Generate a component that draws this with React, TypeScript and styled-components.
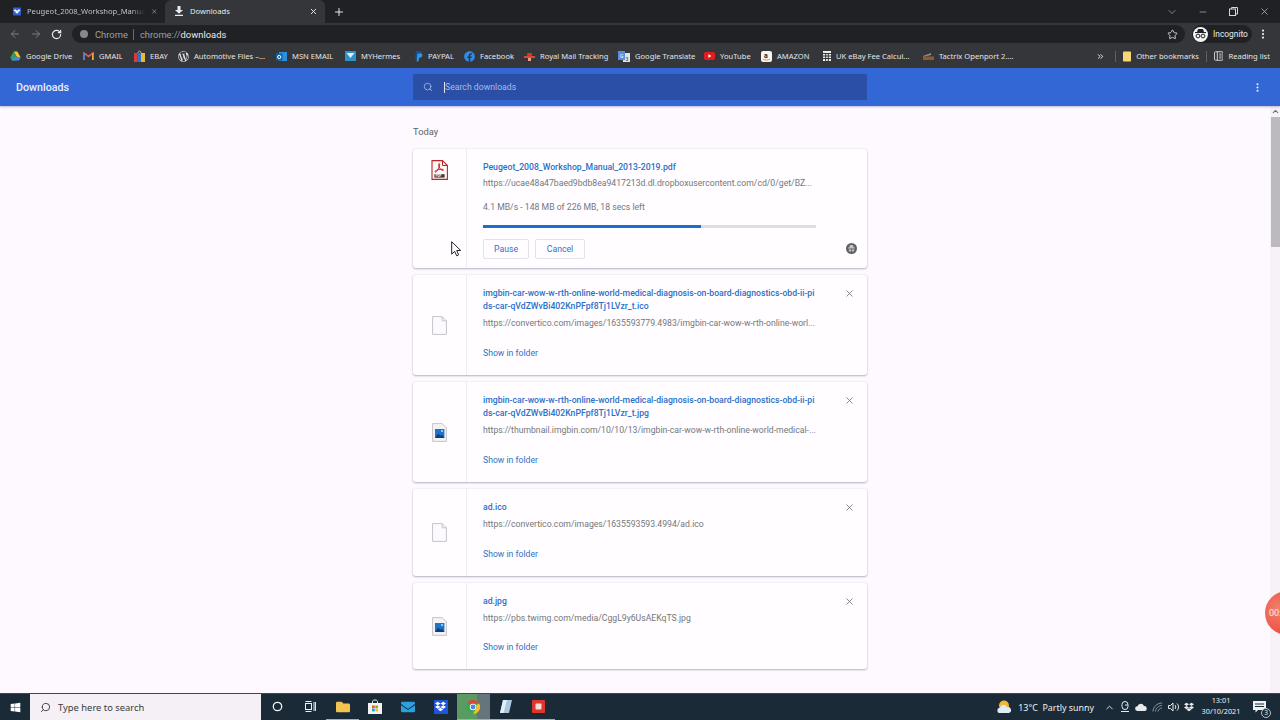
import React from 'react';
import styled, { createGlobalStyle } from 'styled-components';
import {
  ArrowLeft, ArrowRight, RotateCw, Star, MoreVertical, X, Plus, ChevronDown, Minus, Search, ChevronUp,
  ChevronsRight,
} from 'lucide-react';
import { FaDropbox, FaFacebook, FaWordpressSimple, FaWindows, FaFolder, FaEnvelope } from 'react-icons/fa';

const Global = createGlobalStyle`
  html, body { margin: 0; padding: 0; background: #fdf9fe; }
  * { box-sizing: border-box; }
`;

const Screen = styled.div`
  position: relative;
  width: 1280px;
  height: 720px;
  overflow: hidden;
  display: flex;
  flex-direction: column;
  font-family: Roboto, "Liberation Sans", sans-serif;
  background: #fdf9fe;
`;

/* browser chrome */
const TabStrip = styled.div`
  height: 23px;
  background: #202124;
  display: flex;
  align-items: center;
  color: #e8eaed;
  font-family: "Noto Sans", Roboto, sans-serif;
  font-size: 7.6px;
`;
const Tab = styled.div<{ $active?: boolean }>`
  width: ${(p) => (p.$active ? 160 : 165)}px;
  height: 23px;
  padding: 0 7px 1px ${(p) => (p.$active ? 9 : 13)}px;
  display: flex;
  align-items: center;
  gap: 6px;
  background: ${(p) => (p.$active ? '#35363a' : 'transparent')};
  border-radius: 6px 6px 0 0;
  color: ${(p) => (p.$active ? '#e8eaed' : '#bdc1c6')};
`;
const TabTitle = styled.span<{ $fade?: boolean }>`
  flex: 1;
  white-space: nowrap;
  ${(p) => p.$fade && 'mask-image: linear-gradient(to right, #000 88%, transparent 100%);'}
`;
const NewTab = styled.div`
  width: 21px;
  margin-left: 3px;
  display: flex;
  justify-content: center;
`;
const WindowButtons = styled.div`
  margin-left: auto;
  display: flex;
  align-items: center;
  color: #c8cacc;
`;
const WindowButton = styled.div`
  width: 31px;
  display: flex;
  justify-content: center;
`;
const Toolbar = styled.div`
  height: 22px;
  background: #35363a;
  display: flex;
  align-items: center;
  padding: 0 7px 0 4px;
`;
const NavButton = styled.div<{ $dim?: boolean }>`
  width: 21px;
  display: flex;
  justify-content: center;
  color: ${(p) => (p.$dim ? '#7b7d80' : '#e8eaed')};
`;
const Omnibox = styled.div`
  margin-left: 5px;
  flex: 1;
  height: 18px;
  border-radius: 9px;
  background: #202124;
  display: flex;
  align-items: center;
  padding: 0 7px 0 8px;
  font-size: 9.4px;
  color: #9aa0a6;
`;
const SecureDot = styled.div`
  width: 8px;
  height: 8px;
  border-radius: 50%;
  background: #85888c;
  margin-right: 7px;
`;
const OmniDivider = styled.div`
  width: 1px;
  height: 11px;
  background: #6a6c70;
  margin: 0 6px 0 5px;
`;
const UrlStrong = styled.span`
  color: #e8eaed;
`;
const BookmarkStar = styled(Star)`
  margin-left: auto;
  color: #d5d7da;
`;
const IncognitoPill = styled.div`
  margin-left: 7px;
  width: 60px;
  height: 18px;
  border-radius: 9px;
  background: #202124;
  display: flex;
  align-items: center;
  gap: 5px;
  padding-left: 1px;
  color: #e8eaed;
  font-size: 8.4px;
`;
const IncognitoFace = styled.div`
  width: 15px;
  height: 15px;
  border-radius: 50%;
  background: #f1f3f4;
  display: flex;
  align-items: center;
  justify-content: center;
`;
const BookmarkBar = styled.div`
  height: 23px;
  padding: 0 0 1px 10px;
  background: #35363a;
  display: flex;
  align-items: center;
  color: #e3e5e8;
  font-family: "Noto Sans", Roboto, sans-serif;
  font-size: 7.6px;
`;
const Bookmark = styled.div<{ $w: number }>`
  width: ${(p) => p.$w}px;
  flex: none;
  display: flex;
  align-items: center;
  gap: 5px;
  white-space: nowrap;
`;
const BarDivider = styled.div`
  width: 1px;
  height: 11px;
  background: #5f6164;
`;
const BarRight = styled.div`
  margin-left: auto;
  display: flex;
  align-items: center;
  padding-right: 10px;
  gap: 7px;
`;
const OverflowChevrons = styled(ChevronsRight)`
  margin-right: 3px;
`;

/* page header */
const Header = styled.div`
  height: 38px;
  background: #3367d6;
  display: grid;
  grid-template-columns: 1fr 454px 1fr;
  align-items: center;
  box-shadow: 0 1px 2px rgba(60, 64, 120, 0.35);
  z-index: 1;
`;
const HeaderTitle = styled.div`
  padding-left: 16px;
  color: #e8eefb;
  font-size: 10.7px;
  font-weight: 500;
`;
const SearchBox = styled.div`
  height: 26px;
  background: #2b4fa6;
  display: flex;
  align-items: center;
  padding-left: 10px;
  color: #a5bbe8;
  font-size: 8.7px;
  border-radius: 1px;
`;
const Caret = styled.span`
  width: 1px;
  height: 11px;
  background: #dfe7f7;
  margin: 0 0 0 11px;
`;
const HeaderMenu = styled.div`
  display: flex;
  justify-content: flex-end;
  padding-right: 17px;
  color: #e8eefb;
`;

/* downloads list */
const Content = styled.div`
  flex: 1;
  min-height: 0;
  display: flex;
`;
const Scroller = styled.div`
  flex: 1;
  padding-left: 10px;
  display: flex;
  flex-direction: column;
  align-items: center;
  overflow: hidden;
`;
const List = styled.div`
  width: 454px;
`;
const DayLabel = styled.div`
  margin: 19px 0 11px;
  height: 13px;
  line-height: 13px;
  font-size: 9.4px;
  color: #5f6368;
`;
const Card = styled.div`
  display: flex;
  margin-bottom: 7.5px;
  background: #fffdff;
  border-radius: 3px;
  box-shadow: 0 1px 2px rgba(70, 60, 90, 0.35), 0 0 2px rgba(70, 60, 90, 0.12);
`;
const IconColumn = styled.div<{ $top?: boolean }>`
  flex: none;
  width: 54px;
  border-right: 1px solid #f0ecf2;
  display: flex;
  justify-content: center;
  align-items: ${(p) => (p.$top ? 'flex-start' : 'center')};
  padding-top: ${(p) => (p.$top ? 11 : 0)}px;
`;
const CardBody = styled.div<{ $tight?: boolean }>`
  flex: 1;
  padding: 12px 12.5px ${(p) => (p.$tight ? 9 : 13.1)}px 16px;
`;
const TitleRow = styled.div`
  display: flex;
  justify-content: space-between;
`;
const FileName = styled.div`
  font-size: 8.67px;
  line-height: 13px;
  font-weight: 500;
  color: #2a70c8;
  white-space: nowrap;
`;
const CloseIcon = styled.div`
  color: #5f6368;
  height: 13px;
  display: flex;
  align-items: center;
`;
const SourceUrl = styled.div`
  margin-top: 3.4px;
  font-size: 8.67px;
  line-height: 13px;
  color: #74777b;
  white-space: nowrap;
`;
const Status = styled(SourceUrl)`
  margin-top: 10.6px;
`;
const ProgressTrack = styled.div`
  width: 333px;
  height: 3px;
  margin-top: 11px;
  background: #dfdde2;
`;
const ProgressFill = styled.div`
  height: 100%;
  background: #1a6ed2;
`;
const LinkAction = styled.div`
  margin-top: 13.9px;
  height: 18px;
  line-height: 18px;
  font-size: 8.67px;
  color: #2f72c6;
`;
const ButtonRow = styled.div`
  margin-top: 11px;
  margin-right: -2px;
  display: flex;
  align-items: center;
  gap: 6px;
`;
const ActionButton = styled.div<{ $w: number }>`
  width: ${(p) => p.$w}px;
  height: 20px;
  border: 1px solid #e4e1e8;
  border-radius: 2px;
  display: flex;
  align-items: center;
  justify-content: center;
  font-size: 8.67px;
  color: #2f72c6;
`;
const CancelBadge = styled.div`
  margin-left: auto;
  width: 11px;
  height: 11px;
  border-radius: 50%;
  background: #5f6164;
  display: flex;
  align-items: center;
  justify-content: center;
`;

/* scrollbar */
const Scrollbar = styled.div`
  flex: none;
  width: 10px;
  background: #f6f2f7;
  display: flex;
  flex-direction: column;
  align-items: center;
`;
const ScrollArrow = styled.div`
  height: 11px;
  display: flex;
  align-items: center;
  color: #77757b;
`;
const ScrollThumb = styled.div`
  width: 9px;
  height: 130px;
  background: #bdb9c0;
`;

/* taskbar */
const Taskbar = styled.div`
  height: 27px;
  flex: none;
  background: #1b2a37;
  border-top: 1px solid #3c4752;
  display: flex;
  align-items: center;
  color: #f1f1f1;
  font-family: "Noto Sans", Roboto, sans-serif;
`;
const StartButton = styled.div`
  width: 30px;
  display: flex;
  justify-content: center;
  color: #fff;
`;
const TaskSearch = styled.div`
  width: 231px;
  height: 26px;
  background: #f4f0f6;
  display: flex;
  align-items: center;
  gap: 7px;
  padding-left: 10px;
  color: #3a3a3d;
  font-size: 9.4px;
`;
const MirroredSearch = styled(Search)`
  transform: scaleX(-1);
  color: #3a3a3d;
`;
const TaskIcon = styled.div<{ $active?: boolean; $open?: boolean }>`
  width: 32.7px;
  height: 26px;
  display: flex;
  align-items: center;
  justify-content: center;
  background: ${(p) => (p.$active ? 'linear-gradient(to right, #5c9a63 62%, #66747c 62%)' : 'transparent')};
  border-bottom: 1px solid ${(p) => (p.$open ? '#76b9ed' : 'transparent')};
`;
const DropboxTile = styled.div`
  width: 14px;
  height: 14px;
  background: #1f55d8;
  color: #fff;
  display: flex;
  align-items: center;
  justify-content: center;
`;
const Tray = styled.div`
  margin-left: auto;
  display: flex;
  align-items: center;
  height: 26px;
  padding-right: 7px;
`;
const Weather = styled.div`
  display: flex;
  align-items: center;
  gap: 6px;
  font-size: 8.9px;
  margin-right: 7px;
`;
const TrayIcon = styled.div`
  width: 16px;
  display: flex;
  justify-content: center;
  color: #e8ebee;
`;
const Clock = styled.div`
  width: 46px;
  margin: -2px 0 0 1px;
  text-align: center;
  font-size: 7.3px;
  line-height: 11.5px;
`;
const Notify = styled.div`
  position: relative;
  width: 27px;
  margin-left: 2px;
  display: flex;
  justify-content: center;
`;
const NotifyCount = styled.div`
  position: absolute;
  right: 2px;
  bottom: -5px;
  width: 10px;
  height: 10px;
  border-radius: 50%;
  border: 1px solid #b9bec3;
  background: #1b2a37;
  font-size: 6.5px;
  line-height: 8px;
  text-align: center;
`;

/* things lying over the page */
const RecorderBubble = styled.div`
  position: absolute;
  left: 1265px;
  top: 591px;
  width: 44px;
  height: 44px;
  padding-left: 4px;
  border-radius: 50%;
  background: radial-gradient(circle at 30% 40%, #f0806a, #ee4b3f 70%);
  color: #fde9e4;
  font-size: 9px;
  line-height: 44px;
`;
const Pointer = styled.svg`
  position: absolute;
  left: 451px;
  top: 241px;
`;

const DropboxFavicon = () => (
  <svg width="11" height="11" viewBox="0 0 11 11">
    <rect width="11" height="11" rx="1" fill="#2f5fd0" />
    <path d="M3 2.5 5.5 4 3 5.7.9 4zM8 2.5 10.1 4 8 5.7 5.5 4zM3 6.2l2.5-1.6L8 6.2 5.5 8.6z" fill="#fff" />
  </svg>
);
const TabDownload = () => (
  <svg width="10" height="10" viewBox="0 0 10 10">
    <path d="M3.5 0h3v4H9L5 7.800 1 4h2.500zM1 8.800h8V10H1z" fill="#e8eaed" />
  </svg>
);

const DriveIcon = () => (
  <svg width="11" height="10" viewBox="0 0 11 10">
    <path d="M3.7.5h3.6l3.4 6H7.1z" fill="#f6c43c" />
    <path d="M3.7.5 7 6.5 5.3 9.5H2L.3 6.5z" fill="#2da55c" opacity=".95" />
    <path d="M3.8 6.5h6.9L9 9.5H2z" fill="#4a86e8" />
  </svg>
);
const GmailIcon = () => (
  <svg width="11" height="8" viewBox="0 0 11 8">
    <path d="M1 8V1l4.5 3.5L10 1v7" fill="none" stroke="#dc5a50" strokeWidth="1.6" />
    <path d="M9.2 1.2 10.5.4V8H9z" fill="#e8b23c" />
    <path d="M.5.4 1.8 1.2V8H.5z" fill="#4a86e8" />
  </svg>
);
const EbayBags = () => (
  <svg width="11" height="12" viewBox="0 0 11 12">
    <rect y="3" width="3.5" height="9" fill="#dd3b35" />
    <rect x="3.5" y="3" width="3.5" height="9" fill="#2e73c8" />
    <rect x="7" y="3" width="4" height="9" fill="#eab92d" />
    <path d="M4 3C4 .5 7 .5 7 3" fill="none" stroke="#bbb" />
  </svg>
);
const OutlookIcon = () => (
  <svg width="11" height="11" viewBox="0 0 11 11">
    <rect x="3" y="1" width="8" height="9" fill="#2b8fdc" />
    <rect y="2.5" width="6.5" height="7" fill="#0f63ae" />
    <circle cx="3.2" cy="6" r="1.6" fill="none" stroke="#fff" />
  </svg>
);
const HermesIcon = () => (
  <svg width="11" height="10" viewBox="0 0 11 10">
    <rect width="11" height="10" fill="#2d92c9" />
    <path d="M1.5 2h8L5.5 7z" fill="#d9f0fa" />
  </svg>
);
const PaypalIcon = () => (
  <svg width="9" height="11" viewBox="0 0 9 11">
    <path d="M2 0h3.6C8 0 8.5 2 7.6 3.6 7 4.8 5.6 5.2 4 5.2L3.4 8.5H1z" fill="#1a4c9c" />
    <path d="M3.5 2.5h3.2c1.8 0 2 1.8 1.2 3C7.4 6.4 6.4 6.8 5 6.8L4.5 10.5H2.6z" fill="#2e9ad8" />
  </svg>
);
const RoyalMailIcon = () => (
  <svg width="11" height="9" viewBox="0 0 11 9">
    <rect x="0" y="4" width="11" height="2" fill="#d84a35" />
    <rect x="3" y="1" width="5" height="3" rx="1" fill="#cf3b2a" />
    <rect x="4" y="6" width="3" height="3" fill="#e9a08e" />
  </svg>
);
const TranslateIcon = () => (
  <svg width="12" height="11" viewBox="0 0 12 11">
    <rect x="5" y="2" width="7" height="9" fill="#dfe3ea" />
    <rect width="7" height="9" fill="#5a8de0" />
    <text x="2" y="6.5" fontSize="5" fill="#fff" fontFamily="Roboto">G</text>
    <text x="7.5" y="9.5" fontSize="5" fill="#333" fontFamily="Roboto">3</text>
  </svg>
);
const YoutubeIcon = () => (
  <svg width="11" height="8" viewBox="0 0 11 8">
    <rect width="11" height="8" rx="2" fill="#e01e1e" />
    <path d="M4.4 2.2 7.4 4 4.4 5.8z" fill="#fff" />
  </svg>
);
const AmazonIcon = () => (
  <svg width="11" height="11" viewBox="0 0 11 11">
    <rect width="11" height="11" rx="2" fill="#f4f4f4" />
    <text x="3" y="6.8" fontSize="7" fontWeight="700" fill="#222" fontFamily="Roboto">a</text>
    <path d="M2 8.2c2 1.2 5 1.2 7 0" fill="none" stroke="#e8962c" strokeWidth="1" />
  </svg>
);
const CalcIcon = () => (
  <svg width="8" height="10" viewBox="0 0 8 10">
    <rect width="8" height="10" fill="#eee" />
    <path d="M0 2.5h8M0 5h8M0 7.5h8M2.7 2.5V10M5.3 2.5V10" stroke="#222" strokeWidth=".9" />
  </svg>
);
const TactrixIcon = () => (
  <svg width="11" height="7" viewBox="0 0 11 7">
    <path d="M0 3 8 0v2L0 4z" fill="#8b8d90" />
    <rect y="3.5" width="11" height="3.5" fill="#8c5a34" />
  </svg>
);
const FolderBookmark = () => (
  <svg width="9" height="11" viewBox="0 0 9 11">
    <rect width="9" height="11" rx="1" fill="#f7d774" />
  </svg>
);
const ReadingIcon = () => (
  <svg width="10" height="10" viewBox="0 0 10 10" fill="none" stroke="#d5d7da">
    <rect x=".5" y=".5" width="9" height="9" rx="1" />
    <path d="M3.5.5v9M5.5 3h2.500M5.5 5h2.500M5.5 7h2.500" />
  </svg>
);
const IncognitoGlyph = () => (
  <svg width="11" height="10" viewBox="0 0 11 10">
    <path d="M3 0h5l1 3H2z" fill="#202124" />
    <rect y="3" width="11" height="1" fill="#202124" />
    <circle cx="3" cy="7" r="1.9" fill="none" stroke="#202124" />
    <circle cx="8" cy="7" r="1.9" fill="none" stroke="#202124" />
  </svg>
);
const BadgeGlyph = () => (
  <svg width="7" height="7" viewBox="0 0 7 7">
    <path d="M2 0h3l.700 2.500H7V3.500H0V2.500h1.300z" fill="#c4c4c6" />
    <circle cx="2" cy="5.400" r="1.200" fill="#c4c4c6" />
    <circle cx="5" cy="5.400" r="1.200" fill="#c4c4c6" />
  </svg>
);
const RestoreIcon = () => (
  <svg width="9" height="9" viewBox="0 0 9 9" fill="none" stroke="#d5d7da">
    <rect x=".5" y="2" width="6" height="6.5" />
    <path d="M2.5 2V.5h6V7H6.500" />
  </svg>
);

const PdfIcon = () => (
  <svg width="17" height="20" viewBox="0 0 17 20">
    <path d="M1 .6h10.5L16.4 5.5V19.4H1z" fill="#fdf7f8" stroke="#b8262c" strokeWidth="1.1" />
    <path d="M11.5.6V5.5h4.9" fill="none" stroke="#b8262c" />
    <path d="M8 3.500c1.400 0 .6 3.600-1.600 6.800C5 12.600 3.400 12.400 4 11.400c.9-1.400 6-2.800 8-2 1.200.6-.2 1.600-1.600.6C8.400 8.600 7 5 8 3.500z" fill="none" stroke="#c9252c" strokeWidth="1" />
    <rect x="3.4" y="14.2" width="10.2" height="3.4" fill="#3b3b3e" />
    <text x="4.4" y="17.1" fontSize="3.2" fontWeight="700" fill="#fff" fontFamily="Roboto">PDF</text>
  </svg>
);
const BlankFile = () => (
  <svg width="15" height="19" viewBox="0 0 15 19">
    <path d="M.6.6h9.600l4.200 4.200v13.600H.6z" fill="#fdf9fe" stroke="#c6c4c9" />
    <path d="M10.200.6v4.200h4.200" fill="none" stroke="#c6c4c9" />
  </svg>
);
const ImageFile = () => (
  <svg width="15" height="19" viewBox="0 0 15 19">
    <path d="M.6.6h9.600l4.200 4.200v13.600H.6z" fill="#f5f2f7" stroke="#c6c4c9" />
    <rect x="3" y="6" width="9.400" height="9" fill="#1c75c8" />
    <path d="M3 15l3.200-4.400 2.200 2.400 1.400-1.600 2.600 3.600z" fill="#0d3c80" />
    <circle cx="10" cy="8" r="1" fill="#bfe0f7" />
  </svg>
);

const CortanaIcon = () => (
  <svg width="11" height="11" viewBox="0 0 11 11">
    <circle cx="5.5" cy="5.5" r="4.2" fill="none" stroke="#f2f2f2" strokeWidth="1.3" />
  </svg>
);
const TaskViewIcon = () => (
  <svg width="11" height="11" viewBox="0 0 11 11" fill="none" stroke="#f2f2f2">
    <rect x=".5" y="2.5" width="6" height="6" />
    <path d="M.5.5h6M.5 10.500h6M9 1v9M10.600 1v9" />
  </svg>
);
const StoreIcon = () => (
  <svg width="14" height="15" viewBox="0 0 14 15">
    <path d="M4.500 4V2.500C4.500.5 9.500.5 9.500 2.500V4" fill="none" stroke="#f0f0f0" />
    <rect y="4" width="14" height="11" fill="#f3f3f3" />
    <rect x="4" y="6.500" width="2.700" height="2.700" fill="#f25022" />
    <rect x="7.300" y="6.500" width="2.700" height="2.700" fill="#7fba00" />
    <rect x="4" y="9.700" width="2.700" height="2.700" fill="#00a4ef" />
    <rect x="7.300" y="9.700" width="2.700" height="2.700" fill="#ffb900" />
  </svg>
);
const ChromeIcon = () => (
  <svg width="14" height="14" viewBox="0 0 14 14">
    <circle cx="7" cy="7" r="7" fill="#3aa757" />
    <path d="M7 0a7 7 0 0 1 6.100 3.500H7A3.500 3.500 0 0 0 3.800 5.600L1.900 2.200A7 7 0 0 1 7 0z" fill="#e0453a" />
    <path d="M13.100 3.500A7 7 0 0 1 7 14l3-5.200A3.500 3.500 0 0 0 10 5.200z" fill="#f5c02e" />
    <circle cx="7" cy="7" r="3.200" fill="#fff" />
    <circle cx="7" cy="7" r="2.400" fill="#4a86e8" />
  </svg>
);
const NotesIcon = () => (
  <svg width="14" height="15" viewBox="0 0 14 15">
    <path d="M4 1h9l-3 13H1z" fill="#a9c7de" />
    <path d="M4 1h4L4.500 14H1z" fill="#e4eef5" />
  </svg>
);
const RecorderIcon = () => (
  <svg width="13" height="13" viewBox="0 0 13 13">
    <rect width="13" height="13" rx="1" fill="#e0352b" />
    <rect x="3.500" y="3.500" width="6" height="6" rx="1" fill="#f6dcd8" />
  </svg>
);
const WeatherIcon = () => (
  <svg width="15" height="14" viewBox="0 0 15 14">
    <circle cx="7" cy="5.500" r="5" fill="#f2b632" />
    <path d="M3 13a2.600 2.600 0 0 1 0-5.200 3.600 3.600 0 0 1 6.900-.6A3 3 0 0 1 12 13z" fill="#dcecf8" />
  </svg>
);
const MeetIcon = () => (
  <svg width="9" height="12" viewBox="0 0 9 12" fill="none" stroke="#e8ebee">
    <rect x="1" y=".5" width="6" height="8" rx="3" />
    <path d="M0 10.500h8M4 4h3" />
  </svg>
);
const CloudIcon = () => (
  <svg width="12" height="8" viewBox="0 0 12 8">
    <path d="M2.500 8a2.400 2.400 0 0 1 0-4.800A3.400 3.400 0 0 1 9 3a2.500 2.500 0 0 1 .500 5z" fill="#e8ebee" />
  </svg>
);
const WifiIcon = () => (
  <svg width="11" height="10" viewBox="0 0 11 10" fill="none" stroke="#8d969e">
    <path d="M1 9.500C1 5 5 1 10 1M3.500 9.500c0-3 3-6 6.500-6M6 9.500c0-1.500 2-3.500 4-3.500" />
  </svg>
);
const SpeakerIcon = () => (
  <svg width="11" height="10" viewBox="0 0 11 10" fill="none" stroke="#e8ebee">
    <path d="M.5 3.500h2L5 1v8L2.500 6.500h-2zM7 3c1 1 1 3 0 4M9 1.500c2 2 2 5 0 7" />
  </svg>
);
const NotifyIcon = () => (
  <svg width="13" height="12" viewBox="0 0 13 12">
    <path d="M0 0h13v9H5L2.500 11.500V9H0z" fill="#f0f0f0" />
    <path d="M2 3h9M2 5.500h9" stroke="#1b2a37" />
  </svg>
);

const bookmarks: { label: string; w: number; icon: React.ReactNode }[] = [
  { label: 'Google Drive', w: 73, icon: <DriveIcon /> },
  { label: 'GMAIL', w: 51, icon: <GmailIcon /> },
  { label: 'EBAY', w: 44, icon: <EbayBags /> },
  { label: 'Automotive Files –...', w: 98, icon: <FaWordpressSimple size={11} color="#dfe3e8" /> },
  { label: 'MSN EMAIL', w: 69, icon: <OutlookIcon /> },
  { label: 'MYHermes', w: 69, icon: <HermesIcon /> },
  { label: 'PAYPAL', w: 50, icon: <PaypalIcon /> },
  { label: 'Facebook', w: 60, icon: <FaFacebook size={11} color="#2e8bea" /> },
  { label: 'Royal Mail Tracking', w: 94, icon: <RoyalMailIcon /> },
  { label: 'Google Translate', w: 86, icon: <TranslateIcon /> },
  { label: 'YouTube', w: 57, icon: <YoutubeIcon /> },
  { label: 'AMAZON', w: 62, icon: <AmazonIcon /> },
  { label: 'UK eBay Fee Calcul...', w: 100, icon: <CalcIcon /> },
  { label: 'Tactrix Openport 2....', w: 100, icon: <TactrixIcon /> },
];

type Entry = {
  lines: string[];
  url: string;
  kind: 'blank' | 'image';
};

const finished: Entry[] = [
  {
    lines: ['imgbin-car-wow-w-rth-online-world-medical-diagnosis-on-board-diagnostics-obd-ii-pi', 'ds-car-qVdZWvBi402KnPFpf8Tj1LVzr_t.ico'],
    url: 'https://convertico.com/images/1635593779.4983/imgbin-car-wow-w-rth-online-worl...',
    kind: 'blank',
  },
  {
    lines: ['imgbin-car-wow-w-rth-online-world-medical-diagnosis-on-board-diagnostics-obd-ii-pi', 'ds-car-qVdZWvBi402KnPFpf8Tj1LVzr_t.jpg'],
    url: 'https://thumbnail.imgbin.com/10/10/13/imgbin-car-wow-w-rth-online-world-medical-...',
    kind: 'image',
  },
  { lines: ['ad.ico'], url: 'https://convertico.com/images/1635593593.4994/ad.ico', kind: 'blank' },
  { lines: ['ad.jpg'], url: 'https://pbs.twimg.com/media/CggL9y6UsAEKqTS.jpg', kind: 'image' },
];

export default function App() {
  return (
    <Screen>
      <Global />
      <TabStrip>
        <Tab>
          <DropboxFavicon />
          <TabTitle $fade>Peugeot_2008_Workshop_Manua</TabTitle>
          <X size={9} strokeWidth={2} />
        </Tab>
        <Tab $active>
          <TabDownload />
          <TabTitle>Downloads</TabTitle>
          <X size={9} strokeWidth={2.5} />
        </Tab>
        <NewTab><Plus size={12} /></NewTab>
        <WindowButtons>
          <WindowButton><ChevronDown size={12} strokeWidth={1.2} /></WindowButton>
          <WindowButton><Minus size={10} strokeWidth={1.5} /></WindowButton>
          <WindowButton><RestoreIcon /></WindowButton>
          <WindowButton><X size={11} strokeWidth={1.5} /></WindowButton>
        </WindowButtons>
      </TabStrip>

      <Toolbar>
        <NavButton $dim><ArrowLeft size={12} /></NavButton>
        <NavButton $dim><ArrowRight size={12} /></NavButton>
        <NavButton><RotateCw size={11} strokeWidth={2.6} /></NavButton>
        <Omnibox>
          <SecureDot />
          Chrome
          <OmniDivider />
          chrome://<UrlStrong>downloads</UrlStrong>
          <BookmarkStar size={11} />
        </Omnibox>
        <IncognitoPill>
          <IncognitoFace><IncognitoGlyph /></IncognitoFace>
          Incognito
        </IncognitoPill>
        <NavButton><MoreVertical size={12} strokeWidth={2.5} /></NavButton>
      </Toolbar>

      <BookmarkBar>
        {bookmarks.map((b) => (
          <Bookmark key={b.label} $w={b.w}>
            {b.icon}
            {b.label}
          </Bookmark>
        ))}
        <BarRight>
          <OverflowChevrons size={9} strokeWidth={2.5} />
          <BarDivider />
          <Bookmark $w={76}><FolderBookmark />Other bookmarks</Bookmark>
          <BarDivider />
          <Bookmark $w={56}><ReadingIcon />Reading list</Bookmark>
        </BarRight>
      </BookmarkBar>

      <Header>
        <HeaderTitle>Downloads</HeaderTitle>
        <SearchBox>
          <Search size={10} color="#a5bbe8" />
          <Caret />
          Search downloads
        </SearchBox>
        <HeaderMenu><MoreVertical size={11} strokeWidth={2.5} /></HeaderMenu>
      </Header>

      <Content>
        <Scroller>
          <List>
            <DayLabel>Today</DayLabel>
            <Card>
              <IconColumn $top><PdfIcon /></IconColumn>
              <CardBody $tight>
                <FileName>Peugeot_2008_Workshop_Manual_2013-2019.pdf</FileName>
                <SourceUrl>https://ucae48a47baed9bdb8ea9417213d.dl.dropboxusercontent.com/cd/0/get/BZ...</SourceUrl>
                <Status>4.1 MB/s - 148 MB of 226 MB, 18 secs left</Status>
                <ProgressTrack>
                  <ProgressFill style={{ width: `${(148 / 226) * 100}%` }} />
                </ProgressTrack>
                <ButtonRow>
                  <ActionButton $w={46}>Pause</ActionButton>
                  <ActionButton $w={50}>Cancel</ActionButton>
                  <CancelBadge><BadgeGlyph /></CancelBadge>
                </ButtonRow>
              </CardBody>
            </Card>
            {finished.map((f) => (
              <Card key={f.lines.join('')}>
                <IconColumn>{f.kind === 'blank' ? <BlankFile /> : <ImageFile />}</IconColumn>
                <CardBody>
                  <TitleRow>
                    <FileName>
                      {f.lines.map((l) => <div key={l}>{l}</div>)}
                    </FileName>
                    <CloseIcon><X size={11} strokeWidth={1.6} /></CloseIcon>
                  </TitleRow>
                  <SourceUrl>{f.url}</SourceUrl>
                  <LinkAction>Show in folder</LinkAction>
                </CardBody>
              </Card>
            ))}
          </List>
        </Scroller>
        <Scrollbar>
          <ScrollArrow><ChevronUp size={9} strokeWidth={3} /></ScrollArrow>
          <ScrollThumb />
        </Scrollbar>
      </Content>

      <Taskbar>
        <StartButton><FaWindows size={11} /></StartButton>
        <TaskSearch>
          <MirroredSearch size={11} />
          Type here to search
        </TaskSearch>
        <TaskIcon><CortanaIcon /></TaskIcon>
        <TaskIcon><TaskViewIcon /></TaskIcon>
        <TaskIcon $open><FaFolder size={14} color="#f3c44e" /></TaskIcon>
        <TaskIcon><StoreIcon /></TaskIcon>
        <TaskIcon><FaEnvelope size={14} color="#2b9fe0" /></TaskIcon>
        <TaskIcon><DropboxTile><FaDropbox size={11} /></DropboxTile></TaskIcon>
        <TaskIcon $active $open><ChromeIcon /></TaskIcon>
        <TaskIcon $open><NotesIcon /></TaskIcon>
        <TaskIcon $open><RecorderIcon /></TaskIcon>
        <Tray>
          <Weather>
            <WeatherIcon />
            13°C&nbsp; Partly sunny
          </Weather>
          <TrayIcon><ChevronUp size={11} /></TrayIcon>
          <TrayIcon><MeetIcon /></TrayIcon>
          <TrayIcon><CloudIcon /></TrayIcon>
          <TrayIcon><WifiIcon /></TrayIcon>
          <TrayIcon><SpeakerIcon /></TrayIcon>
          <TrayIcon><FaDropbox size={10} /></TrayIcon>
          <Clock>13:01<br />30/10/2021</Clock>
          <Notify>
            <NotifyIcon />
            <NotifyCount>3</NotifyCount>
          </Notify>
        </Tray>
      </Taskbar>

      <RecorderBubble>00:</RecorderBubble>
      <Pointer width="11" height="16" viewBox="0 0 11 16">
        <path d="M.7.7v12.400l3-2.700 2 4.400 2-1-2-4.300h4z" fill="#fff" stroke="#222" strokeWidth="1" />
      </Pointer>
    </Screen>
  );
}
